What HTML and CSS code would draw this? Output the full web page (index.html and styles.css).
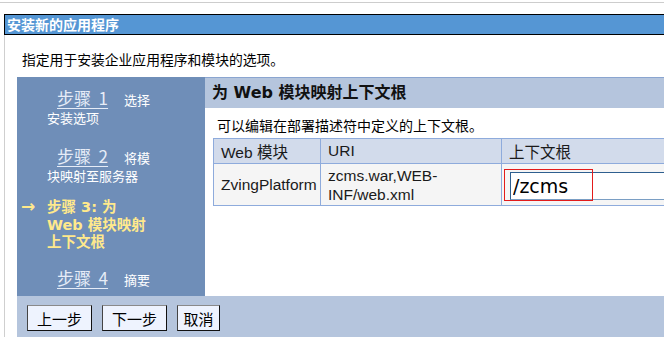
FILE: index.html
```html
<!DOCTYPE html>
<html lang="zh-CN">

<head>
  <meta charset="UTF-8">
  <meta name="viewport" content="width=device-width, initial-scale=1.0">
  <title>安装新的应用程序</title>
  <link rel="stylesheet" href="styles.css">
</head>

<body>
  <div class="topline"></div>
  <div class="titlebar">安装新的应用程序</div>

  <div class="page">
    <p class="intro">指定用于安装企业应用程序和模块的选项。</p>

    <div class="wizard">
      <div class="wizard-main">
        <div class="steps">
          <div class="step step1">
            <a class="step-link">步骤&nbsp; 1</a><span class="step-name">选择<br>安装选项</span>
          </div>
          <div class="step step2">
            <a class="step-link">步骤&nbsp; 2</a><span class="step-name">将模<br>块映射至服务器</span>
          </div>
          <div class="step step3 current">
            <span class="arrow">→</span>步骤 3: 为<br>Web 模块映射<br>上下文根
          </div>
          <div class="step step4">
            <a class="step-link">步骤&nbsp; 4</a><span class="step-name">摘要</span>
          </div>
        </div>

        <div class="pane">
          <div class="pane-head">为 Web 模块映射上下文根</div>
          <p class="pane-desc">可以编辑在部署描述符中定义的上下文根。</p>
          <table class="grid">
            <tr>
              <th class="c1">Web 模块</th>
              <th class="c2">URI</th>
              <th class="c3">上下文根</th>
            </tr>
            <tr>
              <td>ZvingPlatform</td>
              <td>zcms.war,WEB-<br>INF/web.xml</td>
              <td class="root-cell">
                <input class="root-input" type="text" value="/zcms">
                <span class="mark"></span>
              </td>
            </tr>
          </table>
        </div>
      </div>

      <div class="buttons">
        <button class="btn btn-prev">上一步</button>
        <button class="btn btn-next">下一步</button>
        <button class="btn btn-cancel">取消</button>
      </div>
    </div>
  </div>
</body>

</html>
```

FILE: styles.css
```css
html, body {
  margin: 0;
  overflow: hidden;
  background: #fff;
}
body {
  font-family: "DejaVu Sans", "Noto Sans CJK SC", sans-serif;
  color: #000;
  width: 664px;
  height: 337px;
}
.topline {
  height: 2px;
  border-bottom: 1px solid #cdcdcd;
}
.titlebar {
  margin: 11px 0 0 4px;
  height: 19px;
  padding-left: 2px;
  border: 1px solid #000;
  border-right: none;
  background: #5596d4;
  color: #fff;
  font-family: "Noto Sans CJK SC", sans-serif;
  font-weight: bold;
  font-size: 14px;
  line-height: 19px;
}
.page {
  margin-left: 4px;
  border-left: 1px solid #cfcfcf;
  padding-left: 12px;
}
.intro {
  margin: 0 0 8px;
  padding: 14px 0 0 5px;
  font-family: "Noto Sans CJK SC", sans-serif;
  font-size: 13.8px;
  line-height: 20px;
}
.wizard-main {
  display: flex;
  height: 219px;
}
.steps {
  width: 188px;
  flex: none;
  background: #6f8eb8;
  padding-top: 12px;
  box-sizing: border-box;
  color: #fff;
  font-family: "Noto Sans CJK SC", sans-serif;
  font-size: 13px;
}
.step {
  padding-left: 30px;
  line-height: 18px;
}
.step1 { margin-bottom: 20px; }
.step2 { margin-bottom: 14px; }
.step3 { margin-bottom: 17px; }
.step-link {
  display: inline-block;
  margin: 0 16px 0 10px;
  color: #e6ecf7;
  font-size: 17px;
  text-decoration: underline;
  text-underline-offset: 3px;
  text-decoration-thickness: 1px;
}
.current {
  position: relative;
  color: #ffe98c;
  font-weight: bold;
  font-size: 14.5px;
  line-height: 17.5px;
  font-family: "DejaVu Sans", "Noto Sans CJK SC", sans-serif;
}
.arrow {
  position: absolute;
  left: 4px;
  top: -1px;
  font-size: 17px;
  font-weight: bold;
}
.pane {
  flex: 1;
  min-width: 0;
  overflow: hidden;
  border-top: 1px solid #8aa5d0;
  font-family: "Noto Sans CJK SC", sans-serif;
}
.pane-head {
  height: 30px;
  padding-left: 7px;
  background: #b5c5dd;
  color: #111;
  font-family: "DejaVu Sans", "Noto Sans CJK SC", sans-serif;
  font-weight: bold;
  font-size: 16px;
  line-height: 30px;
}
.pane-desc {
  margin: 0;
  padding: 8px 0 0 12px;
  height: 22px;
  font-size: 14px;
  line-height: 18px;
}
.grid {
  margin-left: 8px;
  width: 560px;
  table-layout: fixed;
  border-collapse: collapse;
  border: 1px solid #8eabdc;
  font-family: "Liberation Sans", "Noto Sans CJK SC", sans-serif;
  color: #1a1a1a;
}
.grid th, .grid td {
  border: 1px solid #8eabdc;
  padding: 0 7px;
  text-align: left;
  font-weight: normal;
  white-space: nowrap;
}
.grid th {
  height: 24px;
  background: #d2dbeb;
  font-size: 15.5px;
}
.grid td {
  height: 41px;
  background: #f5f5f5;
  font-size: 15.5px;
  line-height: 19px;
}
.c1 { width: 92px; }
.c2 { width: 166px; }
.c3 { width: 270px; }
.root-cell {
  position: relative;
}
.root-input {
  display: block;
  width: 190px;
  height: 28px;
  margin: 2px 0 0 1px;
  padding: 0 2px;
  box-sizing: border-box;
  border: 1px solid #7a9ec4;
  border-top-color: #2e5f8f;
  border-left-color: #2e5f8f;
  font-family: "DejaVu Sans", sans-serif;
  font-size: 19px;
  color: #000;
  background: #fff;
}
.mark {
  position: absolute;
  left: 2px;
  top: 5px;
  width: 89px;
  height: 32px;
  box-sizing: border-box;
  border: 1px solid #e31b1b;
}
.buttons {
  display: flex;
  gap: 10px;
  height: 41px;
  padding: 9px 0 0 10px;
  box-sizing: border-box;
  background: #b5c5dd;
}
.btn {
  height: 26px;
  padding: 0;
  background: #eef3fe;
  border: 1px solid;
  border-color: #8a8a8a #111 #111 #444;
  font-family: "Noto Sans CJK SC", sans-serif;
  font-size: 15px;
  color: #000;
}
.btn-prev { width: 65px; }
.btn-next { width: 65px; }
.btn-cancel { width: 43px; }
```
